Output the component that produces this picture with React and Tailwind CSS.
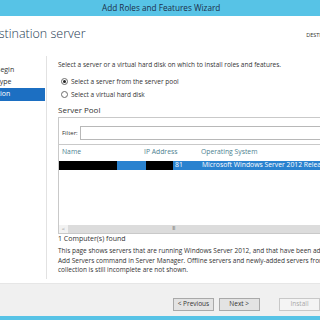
import React from "react";

const font = { fontFamily: '"Open Sans", "Noto Sans", sans-serif' };

const navItems = [
  { label: "Before You Begin", active: false },
  { label: "Installation Type", active: false },
  { label: "Server Selection", active: true },
];

function Radio({ checked, label }) {
  return (
    <div className="flex items-center gap-[3px] h-[13px]">
      <span className="w-[7px] h-[7px] rounded-full border border-[#6b6b6b] bg-white flex items-center justify-center">
        {checked && <span className="w-[3px] h-[3px] rounded-full bg-[#222]" />}
      </span>
      <span>{label}</span>
    </div>
  );
}

function WizButton({ children, disabled }) {
  return (
    <button
      className={`h-[13px] w-[42px] text-[6.5px] leading-none border ${
        disabled
          ? "border-[#c8c8c8] bg-[#f4f4f4] text-[#a8a8a8]"
          : "border-[#a9a9a9] bg-[#e3e3e3] text-[#333]"
      }`}
    >
      {children}
    </button>
  );
}

export default function App() {
  return (
    <div
      className="w-[320px] h-[320px] overflow-hidden bg-white flex flex-col text-[#333]"
      style={font}
    >
      {/* Title bar */}
      <div className="h-[16px] shrink-0 bg-[#57c3e6] flex items-center">
        <span className="ml-[102px] text-[8.2px] text-[#1b2f4a] whitespace-nowrap">
          Add Roles and Features Wizard
        </span>
      </div>

      {/* Heading */}
      <div className="h-[40px] shrink-0 flex items-start justify-between pt-[12px]">
        <span className="-ml-[17px] text-[12.5px] font-light text-[#1e3a52] leading-none whitespace-nowrap">
          Destination server
        </span>
        <span className="-mr-[42px] mt-[3px] text-[5.5px] text-[#333] whitespace-nowrap">
          DESTINATION SERVER
        </span>
      </div>

      {/* Body */}
      <div className="flex flex-1 min-h-0">
        {/* Nav */}
        <div className="w-[47px] shrink-0 border-r border-[#e2e2e2] mb-[4px] pt-[8px] overflow-hidden">
          {navItems.map((item) => (
            <div
              key={item.label}
              className={`h-[13px] flex items-center whitespace-nowrap text-[7px] ${
                item.active ? "bg-[#1c6fc2] text-white w-[45px] -mt-[1px]" : "text-[#333] -mt-[0.5px]"
              }`}
            >
              <span className="-ml-[42px]">{item.label}</span>
            </div>
          ))}
        </div>

        {/* Content */}
        <div className="flex-1 min-w-0 pl-[11px] pt-[4px] text-[6.5px] whitespace-nowrap">
          <div className="h-[10px] flex items-center">
            Select a server or a virtual hard disk on which to install roles and features.
          </div>
          <div className="mt-[5px] pl-[3px]">
            <Radio checked label="Select a server from the server pool" />
            <Radio label="Select a virtual hard disk" />
          </div>

          <div className="mt-[5px] text-[8px] text-[#333] leading-none">Server Pool</div>

          {/* Pool box */}
          <div className="mt-[3px] -mr-[20px] border border-[#c9c9c9] flex flex-col">
            <div className="flex items-center gap-[2px] px-[3px] pt-[8px] pb-[4px] border-b border-[#c9c9c9]">
              <span className="text-[6px]">Filter:</span>
              <div className="flex-1 h-[14px] border border-[#b8b8b8] bg-white" />
            </div>
            <div className="h-[15px] flex items-center text-[6.8px] text-[#4d7f90]">
              <span className="w-[85px] shrink-0 pl-[3px]">Name</span>
              <span className="w-[57px] shrink-0">IP Address</span>
              <span>Operating System</span>
            </div>
            <div className="mt-[1px] h-[9px] flex items-stretch text-[6.8px] text-white leading-none">
              <div className="w-[58px] shrink-0 bg-black" />
              <div className="w-[29px] shrink-0 bg-[#2a82cf]" />
              <div className="w-[27px] shrink-0 bg-black" />
              <div className="flex-1 min-w-0 overflow-hidden bg-[#2a82cf] flex items-center">
                <span className="w-[29px] shrink-0 pl-[2px]">81</span>
                <span>Microsoft Windows Server 2012 Release Candidate</span>
              </div>
            </div>
            <div className="h-[55px]" />
            <div className="h-[8px] flex items-stretch bg-[#e8e8e8]">
              <span className="w-[9px] flex items-center justify-center text-[6px] text-[#888] bg-[#f2f2f2]">
                &lt;
              </span>
              <div className="flex-1 bg-[#dcdcdc] flex items-center justify-center">
                <span className="text-[5px] text-[#666] tracking-[-0.5px] -ml-[60px]">III</span>
              </div>
            </div>
          </div>

          <div className="h-[10px] flex items-center text-[7px]">1 Computer(s) found</div>
          <div className="mt-[2px] leading-[9.5px] text-[6.5px]">
            <div>This page shows servers that are running Windows Server 2012, and that have been added by using the</div>
            <div>Add Servers command in Server Manager. Offline servers and newly-added servers from which data</div>
            <div>collection is still incomplete are not shown.</div>
          </div>
        </div>
      </div>

      {/* Footer */}
      <div className="h-[33px] shrink-0 bg-[#f0f0f0] border-t border-[#e6e6e6] flex items-start pt-[14px] pl-[173px]">
        <WizButton>&lt; Previous</WizButton>
        <span className="w-[5px]" />
        <WizButton>Next &gt;</WizButton>
        <span className="w-[20px]" />
        <WizButton disabled>Install</WizButton>
      </div>
      <div className="h-[4px] shrink-0 bg-[#57c3e6]" />
    </div>
  );
}
